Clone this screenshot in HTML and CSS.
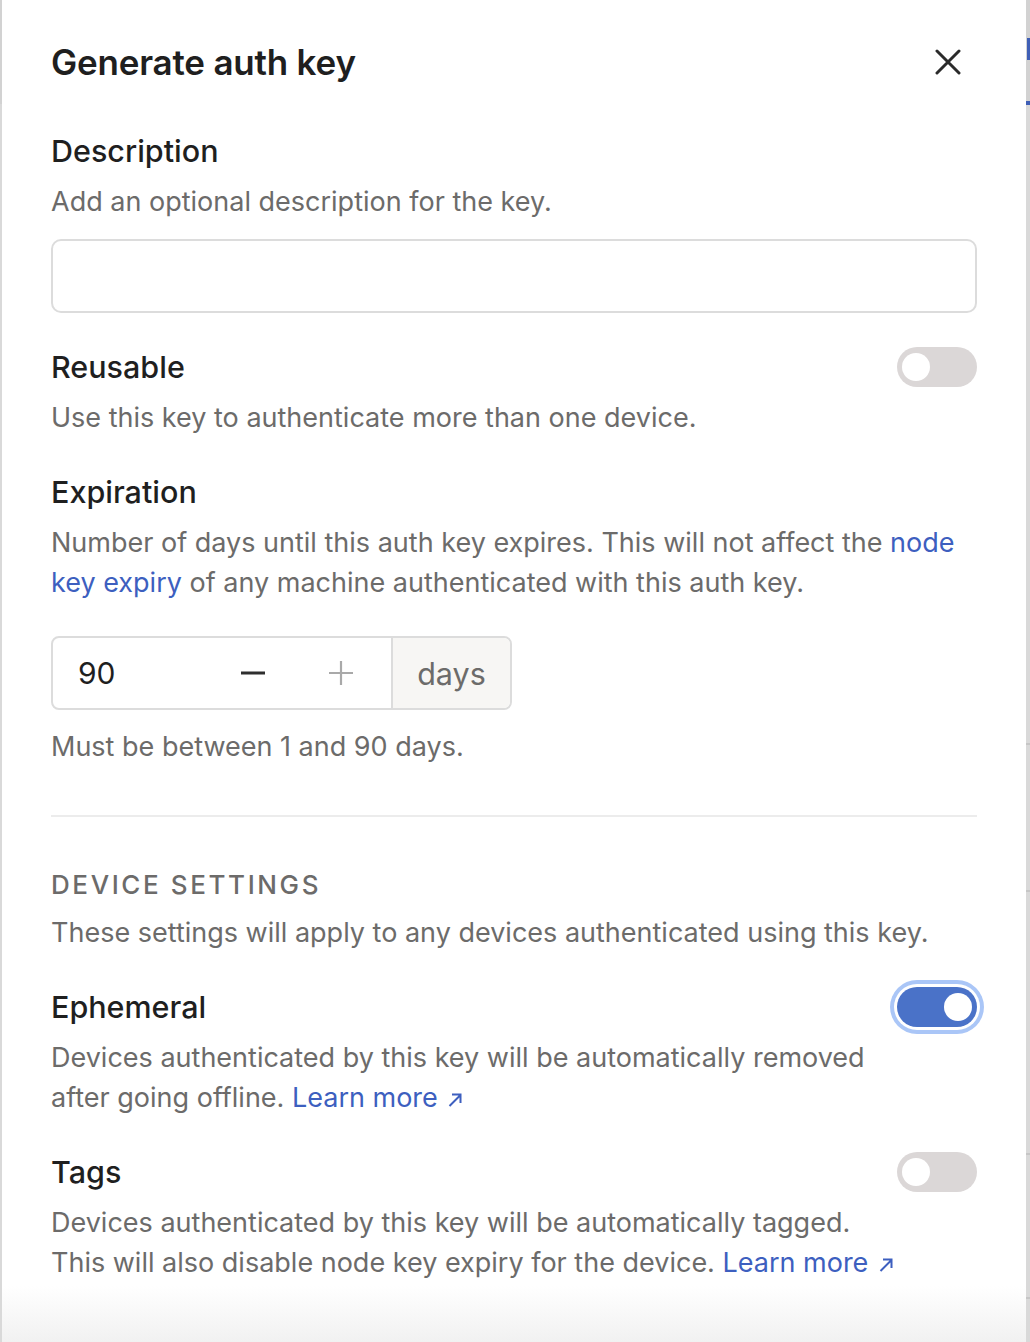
FILE: index.html
```html
<!DOCTYPE html>
<html lang="en">
<head>
<meta charset="utf-8">
<title>Generate auth key</title>
<link rel="stylesheet" href="styles.css">
</head>
<body>
<div class="backdrop">
  <span class="bd-i"></span>
  <span class="bd-bar"></span>
  <span class="bd-line l1"></span>
  <span class="bd-line l2"></span>
  <span class="bd-line l3"></span>
  <span class="bd-line l4"></span>
</div>
<div class="modal">
  <header class="modal-header">
    <h1 class="title">Generate auth key</h1>
    <button class="close" aria-label="Close">
      <svg width="26" height="26" viewBox="0 0 26 26"><path d="M2 2L24 24M24 2L2 24" stroke="#2b2b2b" stroke-width="3" stroke-linecap="round"/></svg>
    </button>
  </header>

  <section class="field first">
    <h2 class="label">Description</h2>
    <p class="help">Add an optional description for the key.</p>
    <div class="text-input"></div>
  </section>

  <section class="field">
    <div class="row">
      <h2 class="label">Reusable</h2>
      <span class="toggle"><span class="knob"></span></span>
    </div>
    <p class="help">Use this key to authenticate more than one device.</p>
  </section>

  <section class="field">
    <h2 class="label">Expiration</h2>
    <p class="help">Number of days until this auth key expires. This will not affect the <a class="link">node</a><br><a class="link">key expiry</a> of any machine authenticated with this auth key.</p>
    <div class="number-input">
      <span class="num">90</span>
      <span class="step minus"><svg width="26" height="26" viewBox="0 0 26 26"><path d="M1 13H25" stroke="#2e2e2e" stroke-width="3"/></svg></span>
      <span class="step plus"><svg width="26" height="26" viewBox="0 0 26 26"><path d="M1 13H25M13 1V25" stroke="#a9a9a9" stroke-width="2.2"/></svg></span>
      <span class="unit">days</span>
    </div>
    <p class="hint">Must be between 1 and 90 days.</p>
  </section>

  <hr class="divider">

  <section class="group">
    <h3 class="group-title">DEVICE SETTINGS</h3>
    <p class="help tight">These settings will apply to any devices authenticated using this key.</p>
  </section>

  <section class="field">
    <div class="row">
      <h2 class="label">Ephemeral</h2>
      <span class="toggle on"><span class="knob"></span></span>
    </div>
    <p class="help">Devices authenticated by this key will be automatically removed<br>after going offline. <a class="link">Learn more <svg class="arrow" width="16" height="16" viewBox="0 0 16 16"><path d="M2.5 14L13.5 3M5 2.5H13.5V11" fill="none" stroke="#3d5fbf" stroke-width="2"/></svg></a></p>
  </section>

  <section class="field">
    <div class="row">
      <h2 class="label">Tags</h2>
      <span class="toggle"><span class="knob"></span></span>
    </div>
    <p class="help">Devices authenticated by this key will be automatically tagged.<br>This will also disable node key expiry for the device. <a class="link">Learn more <svg class="arrow" width="16" height="16" viewBox="0 0 16 16"><path d="M2.5 14L13.5 3M5 2.5H13.5V11" fill="none" stroke="#3d5fbf" stroke-width="2"/></svg></a></p>
  </section>
  <div class="fade"></div>
</div>
</body>
</html>
```
FILE: styles.css
```css
* { box-sizing: border-box; }
html, body { margin: 0; padding: 0; }
body {
  background: #d8d8d8;
  font-family: Inter, "Noto Sans", sans-serif;
  height: 1342px;
  overflow: hidden;
  position: relative;
}
.backdrop { position: absolute; inset: 0; background: linear-gradient(#d2d2d2 0 104px, #d9d9d9 104px); }
.bd-i { position: absolute; left: 1027px; top: 38px; width: 3px; height: 22px; background: #3f5fb6; }
.bd-bar { position: absolute; left: 1026px; top: 101px; width: 4px; height: 4px; background: #3f5fb6; }
.bd-line { position: absolute; left: 1026px; width: 4px; height: 2px; background: #c6c6c6; }
.l1 { top: 743px; } .l2 { top: 890px; } .l3 { top: 1153px; } .l4 { top: 1297px; }

.modal {
  position: relative;
  margin-left: 2px;
  width: 1024px;
  height: 1342px;
  background: #fff;
  padding: 42px 49px 0 49px;
  color: #1f1f1f;
  overflow: hidden;
}
.modal-header { display: flex; justify-content: space-between; align-items: center; height: 40px; }
.title { margin: 0; font-size: 35px; line-height: 40px; font-weight: 600; letter-spacing: -0.2px; }
.close { border: 0; background: none; padding: 0; margin-right: 16px; width: 26px; height: 26px; display: flex; }

.field { margin-top: 34px; }
.field.first { margin-top: 49px; }
.row { display: flex; justify-content: space-between; align-items: center; height: 40px; }
.label { margin: 0; font-size: 30.5px; line-height: 40px; font-weight: 500; }
.help { margin: 11px 0 0; font-size: 27px; line-height: 40px; color: #6c6b6a; }
.help.tight { margin-top: 8px; }
.link { color: #3d5fbf; text-decoration: none; }
.arrow { display: inline-block; vertical-align: -1px; margin-left: 2px; }

.text-input {
  margin-top: 17px;
  height: 74px;
  border: 2px solid #dcdcdc;
  border-radius: 10px;
}

.toggle {
  width: 80px; height: 40px; border-radius: 20px;
  background: #dbd7d7; position: relative; display: block; flex: none;
}
.toggle .knob {
  position: absolute; top: 6px; left: 5px; width: 28px; height: 28px;
  border-radius: 50%; background: #fff;
}
.toggle.on { background: #4a72c8; box-shadow: 0 0 0 3px #fff, 0 0 0 7px #aac6f7; }
.toggle.on .knob { left: auto; right: 5px; }

.number-input {
  margin-top: 33px;
  width: 461px; height: 74px;
  border: 2px solid #dcdcdc; border-radius: 8px;
  display: flex; align-items: center;
  overflow: hidden;
}
.num { font-size: 30px; color: #1f1f1f; padding-left: 25px; width: 158px; flex: none; }
.step { display: flex; justify-content: center; flex: none; }
.minus { width: 84px; }
.plus { width: 92px; }
.unit {
  margin-left: auto;
  width: 119px; height: 100%;
  border-left: 2px solid #dcdcdc;
  background: #f7f6f4;
  display: flex; align-items: center; justify-content: center;
  font-size: 30.5px; color: #6c6b6a;
}
.hint { margin: 17px 0 0; font-size: 27px; line-height: 40px; color: #6c6b6a; }

.divider { border: 0; border-top: 2px solid #ececec; margin: 48px 0 0; }
.group { margin-top: 48px; }
.group-title { margin: 0; font-size: 26px; line-height: 40px; font-weight: 500; letter-spacing: 2.6px; color: #6c6b6a; }

.fade {
  position: absolute; left: 0; right: 0; bottom: 0; height: 56px;
  background: linear-gradient(rgba(242,242,242,0), #f1f1f1);
}
```
